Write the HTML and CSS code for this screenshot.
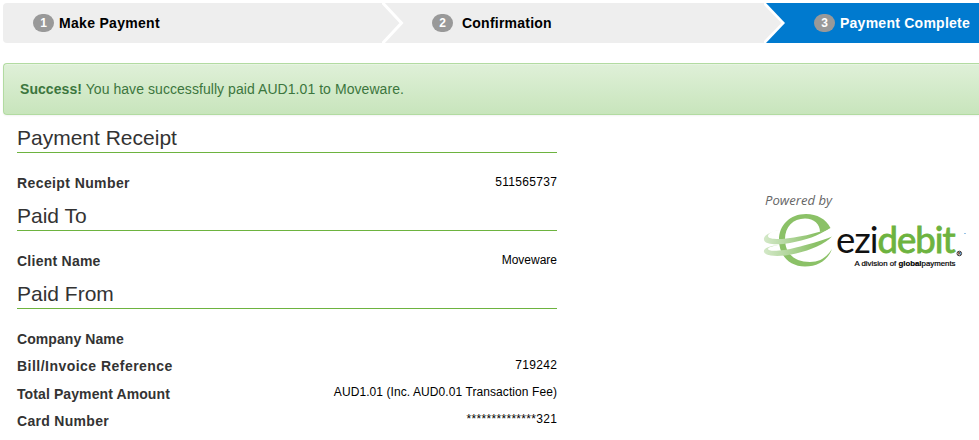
FILE: index.html
```html
<!DOCTYPE html>
<html lang="en">
<head>
<meta charset="utf-8">
<title>Payment Complete</title>
<link rel="stylesheet" href="styles.css">
</head>
<body>
<nav class="steps">
  <div class="step first"><span class="badge">1</span><span class="name n1">Make Payment</span></div>
  <svg class="chevron" width="22" height="40" viewBox="0 0 22 40"><path d="M0 0H22V40H0Z" fill="#eee"/><path d="M-1-2L19.500 20L-1 42" fill="none" stroke="#fff" stroke-width="3"/></svg>
  <div class="step second"><span class="badge">2</span><span class="name n2">Confirmation</span></div>
  <svg class="chevron" width="22" height="40" viewBox="0 0 22 40"><path d="M2 0H22V40H2Z" fill="#007ACF"/><path d="M0 0H2L21 20L2 40H0Z" fill="#fff"/><path d="M0 2L17.500 20L0 38Z" fill="#eee"/></svg>
  <div class="step active"><span class="badge">3</span><span class="name n3">Payment Complete</span></div>
</nav>
<div class="alert"><strong>Success!</strong> <span class="message">You have successfully paid AUD1.01 to Moveware.</span></div>
<main class="content">
  <section class="receipt">
    <h2 class="h1">Payment Receipt</h2>
    <div class="row"><span class="label l1">Receipt Number</span><span class="value v1">511565737</span></div>
    <h2 class="h2">Paid To</h2>
    <div class="row"><span class="label l2">Client Name</span><span class="value">Moveware</span></div>
    <h2 class="h3">Paid From</h2>
    <div class="row"><span class="label l3">Company Name</span></div>
    <div class="row"><span class="label l4">Bill/Invoice Reference</span><span class="value v3">719242</span></div>
    <div class="row low"><span class="label l5">Total Payment Amount</span><span class="value v4">AUD1.01 (Inc. AUD0.01 Transaction Fee)</span></div>
    <div class="row"><span class="label l6">Card Number</span><span class="value v5">**************321</span></div>
  </section>
  <svg class="logo" width="219" height="84" viewBox="760 190 219 84" role="img">
    <defs>
      <linearGradient id="fade" gradientUnits="userSpaceOnUse" x1="764" y1="0" x2="815" y2="0"><stop offset="0" stop-color="#d3e8c7"/><stop offset=".5" stop-color="#b0d59a"/><stop offset="1" stop-color="#8bc167"/></linearGradient>
    </defs>
    <text class="powered" x="765" y="205" textLength="67" lengthAdjust="spacingAndGlyphs">Powered by</text>
    <path d="M830.500 228C826 219 817 214 806 214C790 214 779 225 779 240C779 256 790 266.500 805 266.500C818 266.500 828 260 832 249C827 257 820 262 810 262C794 262 785 253 785 239C785 227 793 218.500 805 218.500C814 218.500 820 224 820 232C825 231 828 229.500 830.500 228Z" fill="#8bc167"/>
    <path d="M780 230C769 232 763 236 764 240C765 245 779 245 790 243C806 240 818 236 830 228C818 233 804 236 794 237.500C783 239.500 768 240 768 236C768 233 774 231 780 230Z" fill="url(#fade)"/>
    <path d="M778 245C768 246 763 249 764 252C766 257 782 257 796 253.500C811 250 825 244 832 236.500C821 241 807 245 796 247.500C783 251 768 252 768 249C768 247 774 246 778 245Z" fill="url(#fade)"/>
    <text class="brand" x="836" y="252.500" textLength="118.500" lengthAdjust="spacingAndGlyphs">ezi<tspan class="debit">debit</tspan></text>
    <circle cx="959.300" cy="253.500" r="2.300" fill="#fff" stroke="#222" stroke-width=".9"/>
    <text class="registered" x="957.900" y="255">R</text>
    <text class="tagline" x="854.500" y="266" textLength="101" lengthAdjust="spacingAndGlyphs">A division of <tspan class="global">global</tspan>payments</text>
    <path d="M964 233.500H966" stroke="#9ac4e8" stroke-width="1"/>
  </svg>
</main>
</body>
</html>
```

FILE: styles.css
```css
body {
  margin: 0;
  height: 440px;
  overflow: hidden;
  background: #fff;
  font: 14px/20px "Liberation Sans", Arial, sans-serif;
  color: #333;
}

.steps {
  display: flex;
  height: 40px;
  padding-top: 3px;
  margin-left: 3px;
}

.step {
  display: flex;
  align-items: center;
  box-sizing: border-box;
  background: #eee;
  color: #000;
  font-weight: bold;
}

.first { width: 379px; padding-left: 30px; border-radius: 4px 0 0 4px; }
.second { width: 360px; padding-left: 28px; }
.active { flex: 1; padding-left: 28px; background: #007acf; color: #fff; }
.chevron { flex: none; }

.badge {
  width: 21px;
  height: 18px;
  flex: none;
  border-radius: 9px;
  background: #999;
  color: #fff;
  font-size: 12px;
  line-height: 18px;
  text-align: center;
}

.name { margin-left: 5px; white-space: nowrap; }
.n1 { letter-spacing: .3px; }
.n2 { margin-left: 9px; letter-spacing: .23px; }
.n3 { letter-spacing: .25px; }

.alert {
  box-sizing: border-box;
  height: 52px;
  margin: 20px 0 0 3px;
  padding: 15px 16px;
  border: 1px solid #b2dba1;
  border-right: 0;
  border-radius: 4px 0 0 4px;
  background: linear-gradient(#dff0d8, #c8e5bc);
  box-shadow: inset 0 1px 0 rgba(255, 255, 255, .25), 0 1px 2px rgba(0, 0, 0, .05);
  color: #3c763d;
  white-space: nowrap;
  letter-spacing: .06px;
}

.content { display: flex; padding-left: 17px; }
.receipt { width: 540px; }

h2 {
  box-sizing: border-box;
  height: 28px;
  margin: 0 0 17px;
  border-bottom: 1px solid #6db33f;
  font-size: 21px;
  font-weight: normal;
  line-height: 24px;
}

.h1 { height: 38px; padding-top: 11px; }
.h2, .h3 { height: 34px; padding-top: 7px; }

.row {
  display: flex;
  justify-content: space-between;
  height: 27px;
  line-height: 27px;
  white-space: nowrap;
}

.low { height: 28px; line-height: 28px; }
.label { font-weight: bold; }
.l1 { letter-spacing: .4px; }
.l2 { letter-spacing: .25px; }
.l3 { letter-spacing: .08px; }
.l4 { letter-spacing: .47px; }
.l5 { letter-spacing: .1px; }
.l6 { letter-spacing: .3px; }
.value { color: #000; font-size: 12px; line-height: 24px; }
.v1 { letter-spacing: .33px; margin-right: -.33px; }
.v3 { letter-spacing: .33px; margin-right: -.33px; }
.v4 { letter-spacing: .08px; }
.v5 { letter-spacing: .32px; margin-right: -.32px; line-height: 23px; }
.logo { margin: 75px 0 0 203px; flex: none; }
.powered { font: italic 13px "Open Sans", sans-serif; fill: #666; }
.brand { font: 36px Lato, sans-serif; fill: #111; letter-spacing: -1px; }
.debit { fill: #6db33f; stroke: #6db33f; stroke-width: .9; }
.registered { font: bold 4px "Liberation Sans", sans-serif; fill: #111; }
.tagline { font: 7.5px "Liberation Sans", sans-serif; fill: #000; stroke: #000; stroke-width: .2; }
.global { font-weight: bold; }
```
